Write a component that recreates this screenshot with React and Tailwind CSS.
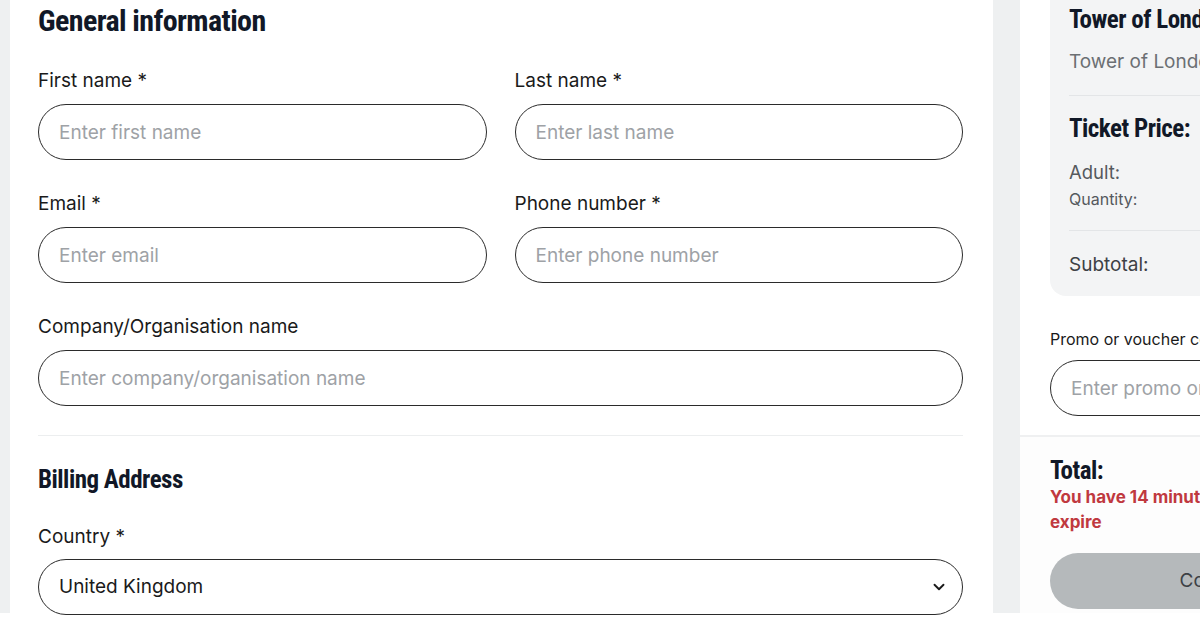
import React from 'react';
import { ChevronDown } from 'lucide-react';

const heading = "font-['Roboto',sans-serif] font-bold text-[#111827] tracking-[-0.02em] [font-stretch:condensed]";

function Field({ label, placeholder, className = '' }) {
  return (
    <div className={`flex flex-col ${className}`}>
      <label className="text-[19px] leading-6 text-[#1a1a1a] mb-[11px]">{label}</label>
      <input
        placeholder={placeholder}
        className="h-14 w-full rounded-full border-[1.5px] border-[#2b2b2b] bg-white px-5 text-[19px] text-[#1a1a1a] placeholder:text-[#9ea2a6] outline-none"
      />
    </div>
  );
}

export default function App() {
  return (
    <div className="w-[1200px] h-[630px] overflow-hidden bg-white font-['Inter',sans-serif]">
      <div className="flex h-[613px] bg-[#eef0f1] pl-[10px]">
        {/* Checkout form */}
        <div className="w-[983px] shrink-0 bg-white pl-[28px] pr-[30px] pt-[4px]">
          <h2 className={`${heading} text-[30px] leading-[34px] mb-[31px]`}>General information</h2>

          <div className="grid grid-cols-2 gap-x-[28px] gap-y-[32px]">
            <Field label="First name *" placeholder="Enter first name" />
            <Field label="Last name *" placeholder="Enter last name" />
            <Field label="Email *" placeholder="Enter email" />
            <Field label="Phone number *" placeholder="Enter phone number" />
            <Field className="col-span-2" label="Company/Organisation name" placeholder="Enter company/organisation name" />
          </div>

          <div className="mt-[29px] h-px bg-[#eceeef]" />

          <h2 className={`${heading} text-[25px] leading-[30px] mt-[29px] mb-[30px]`}>Billing Address</h2>

          <div className="flex flex-col">
            <label className="text-[19px] leading-6 text-[#1a1a1a] mb-[10px]">Country *</label>
            <div className="h-14 w-full rounded-full border-[1.5px] border-[#2b2b2b] px-5 flex items-center justify-between text-[19px] text-[#1a1a1a]">
              <span>United Kingdom</span>
              <ChevronDown size={18} strokeWidth={2.5} className="text-[#1a1a1a] -mr-[6px]" />
            </div>
          </div>
        </div>

        {/* Order summary */}
        <div className="ml-[27px] w-[400px] shrink-0 bg-white flex flex-col">
          <div className="px-[30px]">
            <div className="rounded-b-2xl bg-[#f3f4f5] px-[19px] pb-[19px] -mt-[10px] pt-[15px]">
              <h3 className={`${heading} text-[25px] leading-[30px]`}>Tower of London</h3>
              <p className="text-[19px] leading-6 text-[#6b6f73] mt-[15px]">Tower of London</p>
              <div className="h-px bg-[#e3e5e7] mt-[21px]" />
              <h3 className={`${heading} text-[25px] leading-[30px] mt-[18px]`}>Ticket Price:</h3>
              <p className="text-[18.5px] leading-6 text-[#55595d] mt-[16px]">Adult:</p>
              <p className="text-[16px] leading-5 text-[#55595d] mt-[5px]">Quantity:</p>
              <div className="h-px bg-[#e3e5e7] mt-[21px]" />
              <p className="text-[19px] leading-6 text-[#3d4145] mt-[22px]">Subtotal:</p>
            </div>

            <p className="text-[16px] leading-5 text-[#1a1a1a] mt-[33px]">Promo or voucher code</p>
            <input
              placeholder="Enter promo or voucher code"
              className="mt-[11px] h-14 w-full rounded-full border-[1.5px] border-[#2b2b2b] bg-white px-5 text-[19px] placeholder:text-[#9ea2a6] outline-none"
            />
          </div>

          <div className="mt-[19px] h-[2px] bg-[#eff0f1]" />

          <div className="flex-1 bg-[#fdfdfd] px-[30px] pt-[19px]">
            <h3 className={`${heading} text-[25px] leading-[30px]`}>Total:</h3>
            <p className="text-[17px] leading-[25px] font-bold text-[#c0393f] -mt-[1px]">You have 14 minutes before your tickets expire</p>
            <button className="mt-[18px] h-14 w-full rounded-full bg-[#b5b9bb] text-[19px] text-[#3d4145]">Continue</button>
          </div>
        </div>
      </div>
    </div>
  );
}
